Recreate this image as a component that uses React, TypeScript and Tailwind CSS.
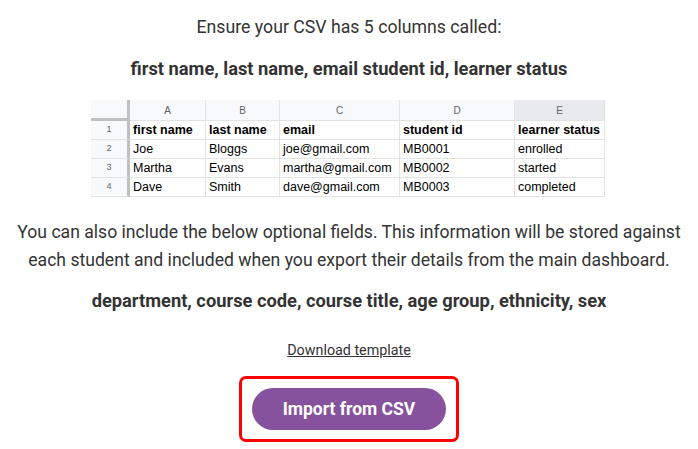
import React from 'react';

const rows = [
  ['first name', 'last name', 'email', 'student id', 'learner status'],
  ['Joe', 'Bloggs', 'joe@gmail.com', 'MB0001', 'enrolled'],
  ['Martha', 'Evans', 'martha@gmail.com', 'MB0002', 'started'],
  ['Dave', 'Smith', 'dave@gmail.com', 'MB0003', 'completed'],
];

const cols = ['A', 'B', 'C', 'D', 'E'];
const widths = ['w-[76px]', 'w-[74px]', 'w-[120px]', 'w-[115px]', 'w-[90px]'];

function Sheet() {
  return (
    <div className="w-[515px] font-['Liberation_Sans',Arial,sans-serif] text-[12.5px] text-black">
      <div className="flex h-[21px] bg-[#f8f9fa]">
        <div className="w-[39px] border-r-[3px] border-b-[3px] border-[#c0c0c0] bg-[#f8f9fa]" />
        {cols.map((c, i) => (
          <div
            key={c}
            className={`${widths[i]} flex items-center justify-center border-r border-b border-[#e2e3e3] text-[10px] text-[#5f6368] ${
              i === 4 ? 'bg-[#e8eaed]' : ''
            }`}
          >
            {c}
          </div>
        ))}
      </div>
      {rows.map((r, ri) => (
        <div key={ri} className="flex h-[19px]">
          <div className="w-[39px] flex items-center justify-center bg-[#f8f9fa] border-r-[3px] border-[#c0c0c0] border-b border-b-[#e2e3e3] text-[9px] text-[#5f6368]">
            {ri + 1}
          </div>
          {r.map((v, ci) => (
            <div
              key={ci}
              className={`${widths[ci]} flex items-center px-[3px] border-r border-b border-[#e2e3e3] whitespace-nowrap ${
                ri === 0 ? 'font-bold' : ''
              }`}
            >
              {v}
            </div>
          ))}
        </div>
      ))}
    </div>
  );
}

export default function App() {
  return (
    <div className="w-[698px] h-[449px] bg-white flex flex-col items-center font-['Roboto',sans-serif] text-[#333333]">
      <p className="mt-[14px] text-[17.7px] leading-[26px]">Ensure your CSV has 5 columns called:</p>
      <p className="mt-[16px] text-[18.3px] leading-[26px] font-bold whitespace-nowrap">
        first name, last name, email student id, learner status
      </p>
      <div className="mt-[18px] self-start ml-[91px]">
        <Sheet />
      </div>
      <p className="mt-[21px] text-[17.6px] leading-[28px] text-center whitespace-nowrap">
        You can also include the below optional fields. This information will be stored against
        <br />
        each student and included when you export their details from the main dashboard.
      </p>
      <p className="mt-[14px] text-[18.3px] leading-[26px] font-bold whitespace-nowrap">
        department, course code, course title, age group, ethnicity, sex
      </p>
      <a href="#" className="mt-[26px] text-[14.3px] leading-[20px] underline text-[#333333]">
        Download template
      </a>
      <div className="mt-[16px] border-[3px] border-[#ff0000] rounded-[7px] px-[10px] py-[9px]">
        <button className="w-[194px] h-[42px] rounded-full bg-[#86529d] text-white font-bold text-[17.5px]">
          Import from CSV
        </button>
      </div>
    </div>
  );
}
